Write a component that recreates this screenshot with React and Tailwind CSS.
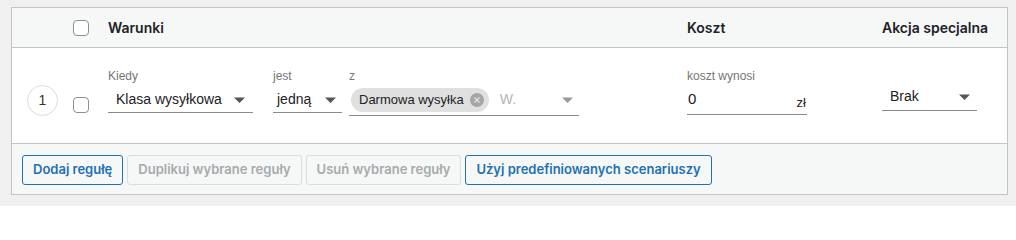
import React from 'react';

const headerFont = { fontFamily: 'Inter, "Noto Sans", sans-serif' };
const fieldFont = { fontFamily: '"Liberation Sans", Arial, sans-serif' };

function Caret({ className = 'text-[#555]' }) {
  return (
    <svg width="11" height="6" viewBox="0 0 11 6" className={className}>
      <path d="M0 0.5 L11 0.5 L5.5 6 Z" fill="currentColor" />
    </svg>
  );
}

function Checkbox() {
  return <span className="block w-4 h-4 rounded-[4px] border border-[#8c8f94] bg-white" />;
}

function FieldLabel({ children }) {
  return <div className="text-[12px] leading-[14px] text-[#757575] h-[14px]">{children}</div>;
}

function SelectField({ label, value, width, padLeft = 'pl-2', caretRight = 'pr-2' }) {
  return (
    <div className="flex flex-col" style={{ width }}>
      <FieldLabel>{label}</FieldLabel>
      <div className={`mt-[4px] h-[26px] flex items-center justify-between border-b border-[#8a8a8a] ${padLeft} ${caretRight}`}>
        <span className="text-[14px] text-[#222]">{value}</span>
        <Caret />
      </div>
    </div>
  );
}

function Chip({ children }) {
  return (
    <span className="inline-flex items-center h-6 rounded-full bg-[#e0e0e0] pl-2 pr-[5px] gap-[6px]">
      <span className="text-[13px] text-[#222]">{children}</span>
      <span className="w-[14px] h-[14px] rounded-full bg-[#a6a6a6] flex items-center justify-center">
        <svg width="6" height="6" viewBox="0 0 6 6">
          <path d="M0.5 0.5 L5.5 5.5 M5.5 0.5 L0.5 5.5" stroke="#e0e0e0" strokeWidth="1.4" />
        </svg>
      </span>
    </span>
  );
}

function WpButton({ children, disabled }) {
  return (
    <button
      type="button"
      disabled={disabled}
      className={
        disabled
          ? 'h-[30px] px-[10px] rounded-[3px] border border-[#dcdcde] bg-[#f6f7f7] text-[#a7aaad] text-[13px] font-semibold'
          : 'h-[30px] px-[10px] rounded-[3px] border border-[#2271b1] bg-[#f6f7f7] text-[#2271b1] text-[13px] font-semibold'
      }
      style={headerFont}
    >
      {children}
    </button>
  );
}

export default function App() {
  return (
    <div className="w-[1016px] h-[206px] bg-[#f0f0f1] pt-[7px] pl-[11px]">
      <div className="w-[997px] border border-[#c3c4c7] bg-white">
        {/* header */}
        <div className="flex items-center h-[40px] bg-[#f6f7f7] border-b border-[#c3c4c7] text-[14px] font-semibold text-[#1d2327]" style={headerFont}>
          <div className="w-[61px]" />
          <div className="w-[35px] flex"><Checkbox /></div>
          <div className="w-[579px]">Warunki</div>
          <div className="w-[195px]">Koszt</div>
          <div className="flex-1">Akcja specjalna</div>
        </div>

        {/* rule row */}
        <div className="flex items-start h-[96px] border-b border-[#c3c4c7] pt-[21px]" style={fieldFont}>
          <div className="w-[61px] flex pl-[15px] pt-[16px]">
            <span className="w-[31px] h-[31px] rounded-full border border-[#dcdcde] flex items-center justify-center text-[14px] text-[#333]">1</span>
          </div>
          <div className="w-[35px] flex pt-[28px]"><Checkbox /></div>
          <div className="w-[579px] flex">
            <SelectField label="Kiedy" value="Klasa wysyłkowa" width={145} />
            <div className="w-5" />
            <SelectField label="jest" value="jedną" width={69} padLeft="pl-1" caretRight="pr-[6px]" />
            <div className="w-[7px]" />
            <div className="flex flex-col w-[230px]">
              <FieldLabel>z</FieldLabel>
              <div className="mt-px h-[32px] flex items-center border-b border-[#8a8a8a] pl-[2px] pr-[6px]">
                <Chip>Darmowa wysyłka</Chip>
                <span className="ml-[11px] text-[14px] text-[#b5b5b5]">W.</span>
                <span className="ml-auto"><Caret className="text-[#999]" /></span>
              </div>
            </div>
          </div>
          <div className="w-[195px] flex">
            <div className="flex flex-col w-[120px]">
              <FieldLabel>koszt wynosi</FieldLabel>
              <div className="mt-[2px] h-[30px] flex items-center justify-between border-b border-[#8a8a8a] pl-[1px] pr-[1px]">
                <span className="text-[15px] text-[#222]">0</span>
                <span className="text-[13px] text-[#222] mt-[6px]">zł</span>
              </div>
            </div>
          </div>
          <div className="flex-1 flex">
            <div className="flex flex-col w-[95px] pt-[14px]">
              <div className="h-[28px] flex items-center justify-between border-b border-[#8a8a8a] pl-2 pr-[7px]">
                <span className="text-[14px] text-[#222]">Brak</span>
                <Caret />
              </div>
            </div>
          </div>
        </div>

        {/* footer */}
        <div className="flex items-center gap-1 h-[50px] bg-[#f6f7f7] pl-[10px] pt-px">
          <WpButton>Dodaj regułę</WpButton>
          <WpButton disabled>Duplikuj wybrane reguły</WpButton>
          <WpButton disabled>Usuń wybrane reguły</WpButton>
          <WpButton>Użyj predefiniowanych scenariuszy</WpButton>
        </div>
      </div>
    </div>
  );
}
